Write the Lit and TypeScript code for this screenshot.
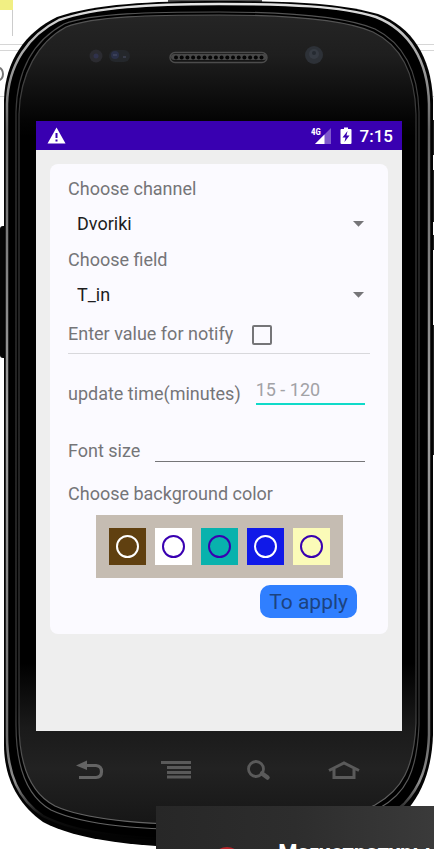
import { LitElement, html, css, svg } from "lit";
import { customElement, state } from "lit/decorators.js";

interface Swatch {
  name: string;
  tone: string;
}

const SWATCHES: Swatch[] = [
  { name: "Brown", tone: "brown" },
  { name: "White", tone: "white" },
  { name: "Teal", tone: "teal" },
  { name: "Blue", tone: "blue" },
  { name: "Yellow", tone: "yellow" },
];

const BODY =
  "M4 100C5 60 26 32 57 17C95 4 150 1 219 1C290 1 340 3 378 14C412 27 431 56 433 100V735C432 765 424 790 408 809C370 845 290 848 219 848C140 848 76 840 43 822C16 803 4 775 4 745Z";
const RIM =
  "M7 104C8 64 29 35 59 20C96 7 150 4 219 4C290 4 340 6 376 17C409 30 428 60 429 104V735C428 765 421 786 404 804C370 836 290 840 219 840C132 840 78 834 43 816C19 800 7 775 7 735Z";
const RING_OUTER =
  "M16 112C17 70 33 41 64 24C92 13 152 12 219 12C290 12 346 17 375 29C405 44 418 72 419 112V725C417 772 406 794 378 809C342 828 288 830 219 830C145 830 85 826 51 810C28 797 16 770 16 725Z";
const RING_INNER =
  "M19 114C20 74 38 42 66 27C94 16 152 15 219 15C290 15 345 20 373 32C402 46 415 74 416 114V723C414 768 402 790 375 805C340 823 288 825 219 825C150 825 88 821 55 806C32 794 19 767 19 723Z";

/** Handset shell with its bezel rings, speaker and sensors. */
@customElement("phone-shell")
export class PhoneShell extends LitElement {
  static styles = css`
    :host {
      display: block;
    }
    .art {
      display: block;
      width: 100%;
      height: 100%;
    }
  `;

  render() {
    return html`
      <svg class="art" viewBox="0 0 434 849" preserveAspectRatio="none" aria-hidden="true">
        <defs>
          <linearGradient id="face" x1="0" y1="0" x2="0" y2="1">
            <stop offset="0" stop-color="#252525" />
            <stop offset="0.05" stop-color="#1e1e1e" />
            <stop offset="0.13" stop-color="#040404" />
            <stop offset="0.15" stop-color="#000" />
            <stop offset="0.8" stop-color="#000" />
            <stop offset="0.88" stop-color="#1a1a1a" />
            <stop offset="0.93" stop-color="#222" />
            <stop offset="1" stop-color="#161616" />
          </linearGradient>
          <linearGradient id="rim" x1="0" y1="0" x2="0" y2="1">
            <stop offset="0" stop-color="#e4e4e4" />
            <stop offset="0.06" stop-color="#a8a8a8" />
            <stop offset="0.15" stop-color="#666" />
            <stop offset="0.5" stop-color="#a0a0a0" />
            <stop offset="0.88" stop-color="#6a6a6a" />
            <stop offset="0.93" stop-color="#909090" />
            <stop offset="0.97" stop-color="#111" />
            <stop offset="1" stop-color="#000" />
          </linearGradient>
          <linearGradient id="ring" x1="0" y1="0" x2="0" y2="1">
            <stop offset="0" stop-color="#555" />
            <stop offset="0.12" stop-color="#383838" />
            <stop offset="0.85" stop-color="#3a3a3a" />
            <stop offset="0.95" stop-color="#5c5c5c" />
            <stop offset="1" stop-color="#666" />
          </linearGradient>
        </defs>
        <path d="M0 0H13V10H0Z" fill="#f1ef83" />
        <path d="M12.500 10V36" stroke="#ccc" />
        <path d="M0 44.500H30M0 50.500H26M0 96.500H8M410 44.500H434M412 50.500H434M430 96.500H434" stroke="#d6d6d6" fill="none" />
        <ellipse cx="-1" cy="74" rx="4" ry="6" fill="none" stroke="#777" stroke-width="2" />
        <path d="M168 0H262V2H168Z" fill="#555" />
        <path d="M433 120H434V155H433ZM433 170H434V222H433ZM433 235H434V250H433ZM433 325H434V455H433Z" fill="#222" />
        <rect x="0" y="226" width="8" height="132" rx="3" fill="#050505" />
        <path d="${BODY}" fill="#030303" />
        <path d="${RIM}" fill="#000" stroke="url(#rim)" stroke-width="2.5" />
        <path d="${RING_OUTER}" fill="#000" stroke="url(#ring)" stroke-width="1.2" />
        <path d="${RING_INNER}" fill="url(#face)" stroke="url(#ring)" stroke-width="1.2" />
        <circle cx="96" cy="56" r="6.5" fill="#2b2b30" />
        <circle cx="96" cy="56" r="2.5" fill="#30324c" />
        <rect x="109" y="50" width="21" height="12" rx="6" fill="#24272b" />
        <circle cx="115" cy="55" r="4" fill="#2a3048" />
        <path d="M113 55H117M123 57H126" stroke="#4b5168" />
        <circle cx="314" cy="55" r="9" fill="#2d3137" />
        <circle cx="314" cy="54" r="5" fill="#363b43" />
        <circle cx="314" cy="53" r="2" fill="#252a31" />
        <rect x="170" y="52.500" width="97" height="10" rx="5" fill="#151515" stroke="#4c4c4c" stroke-width="1.4" />
        <path d="M174 57H264" stroke="#484848" stroke-width="6" stroke-linecap="round" />
        ${Array.from({ length: 16 }, (_, i) => svg`<circle cx=${176 + i * 5.7} cy="57.500" r="2" fill="#050505" />`)}
      </svg>
    `;
  }
}

@customElement("app-root")
export class AppRoot extends LitElement {
  static styles = css`
    :host {
      display: block;
      background: #fff;
      font-family: Roboto, "Liberation Sans", sans-serif;
      font-size: 18px;
      line-height: 24px;
      color: #757578;
    }
    * {
      box-sizing: border-box;
    }
    .phone {
      position: relative;
      display: flex;
      flex-direction: column;
      min-height: 100vh;
      padding: 121px 32px 0 36px;
      overflow: hidden;
    }
    .shell {
      position: absolute;
      inset: 0;
    }
    .screen {
      position: relative;
      flex: 1;
      background: #eee;
    }
    .status {
      display: flex;
      align-items: center;
      gap: 8px;
      height: 29px;
      padding: 0 9px 0 11px;
      background: #3900b1;
      color: #fff;
      font-size: 17px;
      font-weight: 500;
    }
    .warn {
      margin-right: auto;
    }
    .status svg,
    .keys svg {
      display: block;
    }
    .card {
      display: flex;
      flex-direction: column;
      margin: 14px;
      padding: 12px 18px 16px;
      border-radius: 8px;
      background: #fbfaff;
      white-space: nowrap;
    }
    .title {
      height: 24px;
      line-height: 26px;
    }
    .pick {
      display: flex;
      align-items: center;
      height: 47px;
      padding-right: 6px;
    }
    .select {
      appearance: none;
      flex: 1;
      min-width: 0;
      height: 32px;
      padding: 0 9px;
      border: 0;
      background: none;
      color: #1d1d20;
      font: inherit;
    }
    .arrow {
      display: block;
      pointer-events: none;
    }
    .notify {
      display: flex;
      align-items: center;
      gap: 19px;
      height: 36px;
      padding-bottom: 4px;
      border-bottom: 1px solid #d8d8dc;
    }
    .check {
      appearance: none;
      width: 20px;
      height: 20px;
      margin: 3px 0 0;
      border: 2px solid #757578;
      border-radius: 2px;
    }
    .check:checked {
      background: #03dac5;
    }
    .line {
      display: flex;
      align-items: center;
      gap: 15px;
      height: 26px;
      margin-top: 25px;
      padding-right: 5px;
    }
    .line + .line {
      margin-top: 31px;
    }
    .side {
      padding-top: 3px;
    }
    .field {
      flex: 1;
      min-width: 0;
      height: 26px;
      padding: 0 0 5px;
      border: 0;
      border-bottom: 1px solid #757578;
      border-radius: 0;
      outline: 0;
      background: none;
      color: #1d1d20;
      font: inherit;
    }
    .field.active {
      border-bottom: 2px solid #0fdac9;
      padding-bottom: 3px;
    }
    .field::placeholder {
      color: #a2a2a6;
      opacity: 1;
    }
    .caption {
      margin-top: 20px;
    }
    .palette {
      display: flex;
      align-self: center;
      gap: 9px;
      margin-top: 9px;
      padding: 13px;
      background: #c5bcb2;
    }
    .swatch {
      display: grid;
      place-items: center;
      width: 37px;
      height: 37px;
      color: #3900b1;
    }
    .brown {
      background: #604010;
      color: #fff;
    }
    .white {
      background: #fff;
    }
    .teal {
      background: #08b2ad;
    }
    .blue {
      background: #1019e8;
      color: #fff;
    }
    .yellow {
      background: #fbfbb8;
    }
    .radio {
      appearance: none;
      width: 23px;
      height: 23px;
      margin: 0;
      border: 2px solid currentColor;
      border-radius: 50%;
      color: inherit;
    }
    .radio:checked {
      background: radial-gradient(currentColor 45%, transparent 50%);
    }
    .apply {
      align-self: flex-end;
      height: 33px;
      margin: 7px 13px 0 0;
      padding: 1px 9px 0;
      border: 0;
      border-radius: 10px;
      background: #307fff;
      color: #1c437f;
      font: inherit;
      font-size: 21px;
    }
    .keys {
      position: relative;
      display: flex;
      justify-content: space-between;
      height: 118px;
      padding: 28px 42px 0 40px;
    }
    .key {
      height: 24px;
      padding: 0;
      border: 0;
      background: none;
    }
    .banner {
      position: absolute;
      right: 0;
      bottom: 0;
      display: flex;
      align-items: flex-start;
      gap: 36px;
      width: 64%;
      height: 43px;
      padding: 35px 0 0 56px;
      overflow: hidden;
      background: linear-gradient(90deg, #272727, #2d2d2d 50%, #3a3a3a);
      color: #fff;
      font-size: 22px;
      font-weight: 700;
      white-space: nowrap;
    }
    .dot {
      flex: none;
      width: 30px;
      height: 30px;
      margin-top: 6px;
      border-radius: 50%;
      background: #b5262b;
    }
  `;

  @state() private color = "";

  private arrow() {
    return html`<svg class="arrow" width="11" height="6" viewBox="0 0 11 6" aria-hidden="true">
      <path d="M0 0H11L5.500 5.800Z" fill="#757578" />
    </svg>`;
  }

  render() {
    return html`
      <main class="phone">
        <phone-shell class="shell"></phone-shell>
        <section class="screen">
          <header class="status">
            <svg class="warn" width="19" height="17" viewBox="0 0 19 17" aria-hidden="true">
              <path d="M9.500 0.500L18.500 16.500H0.500Z" fill="#fff" />
              <path d="M9.500 6V11M9.500 12.500V14.500" stroke="#3900b1" stroke-width="2" />
            </svg>
            <svg width="21" height="18" viewBox="0 0 21 18" role="img" aria-label="4G signal">
              <path d="M20 1V17H4Z" fill="#7f58cc" />
              <path d="M0 0H11V8.500H0Z" fill="#3900b1" />
              <path d="M13.500 7.500V17H4Z" fill="#fff" />
              <text x="0" y="8" fill="#fff" font-size="9" font-weight="700" font-family="Roboto Condensed, Roboto">4G</text>
            </svg>
            <svg width="12" height="18" viewBox="0 0 12 18" role="img" aria-label="Battery charging">
              <path d="M4 0.500H8V2H10.500Q11.500 2 11.500 3V16Q11.500 17 10.500 17H1.500Q0.500 17 0.500 16V3Q0.500 2 1.500 2H4Z" fill="#fff" />
              <path d="M7.500 4L2.500 10.500H5.500L4.500 15L9.500 8.500H6.500Z" fill="#3900b1" />
            </svg>
            <time>7:15</time>
          </header>
          <form class="card" @submit=${(e: Event) => e.preventDefault()}>
            <label class="title" for="channel">Choose channel</label>
            <div class="pick">
              <select class="select" id="channel"><option>Dvoriki</option></select>
              ${this.arrow()}
            </div>
            <label class="title" for="field">Choose field</label>
            <div class="pick">
              <select class="select" id="field"><option>T_in</option></select>
              ${this.arrow()}
            </div>
            <div class="notify">
              <label for="notify">Enter value for notify</label>
              <input class="check" id="notify" type="checkbox" />
            </div>
            <div class="line">
              <label class="side" for="time">update time(minutes)</label>
              <input class="field active" id="time" placeholder="15 - 120" inputmode="numeric" />
            </div>
            <div class="line">
              <label class="side" for="size">Font size</label>
              <input class="field" id="size" inputmode="numeric" />
            </div>
            <div class="caption" id="colors">Choose background color</div>
            <div class="palette" role="radiogroup" aria-labelledby="colors">
              ${SWATCHES.map(
                (s) => html`<label class="swatch ${s.tone}">
                  <input
                    class="radio"
                    type="radio"
                    name="color"
                    aria-label=${s.name}
                    .checked=${this.color === s.tone}
                    @change=${() => (this.color = s.tone)}
                  />
                </label>`
              )}
            </div>
            <button class="apply">To apply</button>
          </form>
        </section>
        <nav class="keys">
          <button class="key" aria-label="Back">
            <svg width="28" height="24" viewBox="0 0 28 24">
              <path d="M8 6.500H20Q25.500 7 25.500 12.500Q25.500 18.500 20 18.500H3" fill="none" stroke="#646464" stroke-width="3.200" />
              <path d="M0 6.500L11 1.500V11Z" fill="#646464" />
            </svg>
          </button>
          <button class="key" aria-label="Menu">
            <svg width="30" height="24" viewBox="0 0 30 24">
              <path d="M0 3.500H30M6 8.500H30M6 13.500H30M6 18H30" stroke="#5a5a5a" stroke-width="3" />
            </svg>
          </button>
          <button class="key" aria-label="Search">
            <svg width="24" height="24" viewBox="0 0 24 24">
              <circle cx="9" cy="10" r="7.500" fill="none" stroke="#5a5a5a" stroke-width="2.800" />
              <path d="M15 14.500L20.500 18.500" stroke="#5a5a5a" stroke-width="4.500" stroke-linecap="round" />
            </svg>
          </button>
          <button class="key" aria-label="Home">
            <svg width="32" height="24" viewBox="0 0 32 24">
              <path d="M1 11.500L16 4L31 11.500M6 9.500V18.500H26V9.500" fill="none" stroke="#5a5a5a" stroke-width="3" />
            </svg>
          </button>
        </nav>
        <aside class="banner"><span class="dot"></span>Магистратуры</aside>
      </main>
    `;
  }
}
